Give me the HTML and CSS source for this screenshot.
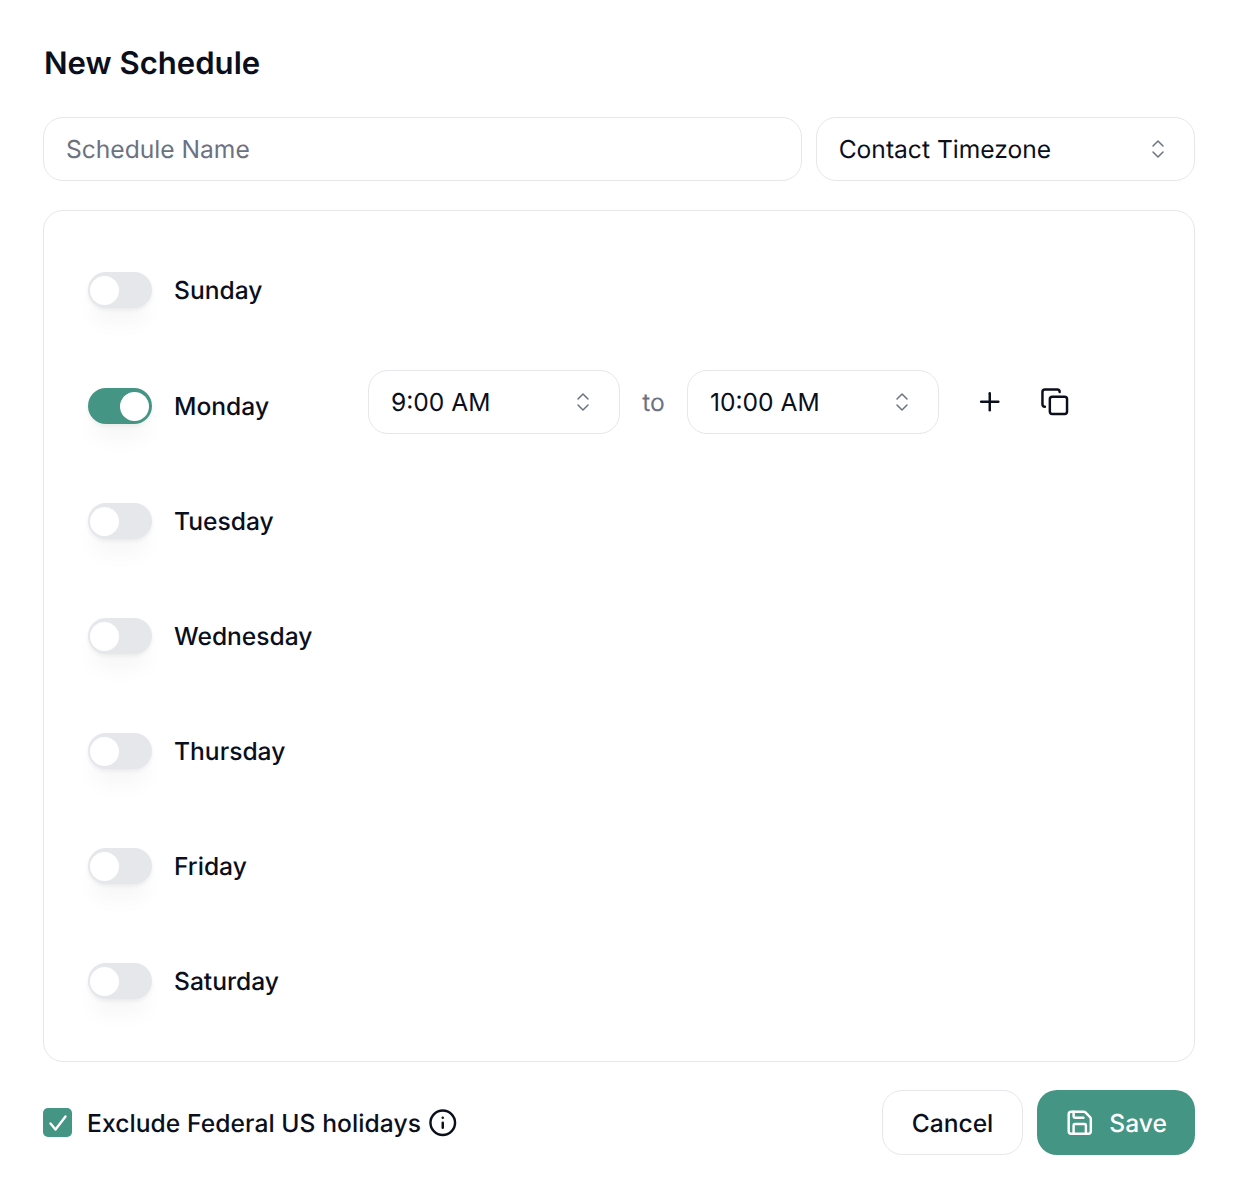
FILE: index.html
```html
<!DOCTYPE html>
<html lang="en">
<head>
<meta charset="utf-8">
<title>New Schedule</title>
<link rel="stylesheet" href="styles.css">
</head>
<body>
<main class="page">
  <h1 class="title">New Schedule</h1>
  <div class="top-fields">
    <input class="field name-input" type="text" placeholder="Schedule Name">
    <button class="field select" type="button"><span>Contact Timezone</span>
      <svg class="chev" viewBox="0 0 24 24"><path d="m7 15 5 5 5-5"/><path d="m7 9 5-5 5 5"/></svg>
    </button>
  </div>
  <section class="card">
    <div class="row">
      <div class="day"><span class="toggle"><span class="thumb"></span></span><span class="day-label">Sunday</span></div>
    </div>
    <div class="row row-monday">
      <div class="day"><span class="toggle on"><span class="thumb"></span></span><span class="day-label">Monday</span></div>
      <div class="slots">
        <button class="field select time" type="button"><span>9:00 AM</span>
          <svg class="chev" viewBox="0 0 24 24"><path d="m7 15 5 5 5-5"/><path d="m7 9 5-5 5 5"/></svg>
        </button>
        <span class="to">to</span>
        <button class="field select time" type="button"><span>10:00 AM</span>
          <svg class="chev" viewBox="0 0 24 24"><path d="m7 15 5 5 5-5"/><path d="m7 9 5-5 5 5"/></svg>
        </button>
        <div class="slot-actions">
          <svg class="icon" viewBox="0 0 24 24"><path d="M5 12h14"/><path d="M12 5v14"/></svg>
          <svg class="icon" viewBox="0 0 24 24"><rect x="8" y="8" width="14" height="14" rx="2" ry="2"/><path d="M4 16c-1.1 0-2-.9-2-2V4c0-1.1.9-2 2-2h10c1.1 0 2 .9 2 2"/></svg>
        </div>
      </div>
    </div>
    <div class="row">
      <div class="day"><span class="toggle"><span class="thumb"></span></span><span class="day-label">Tuesday</span></div>
    </div>
    <div class="row">
      <div class="day"><span class="toggle"><span class="thumb"></span></span><span class="day-label">Wednesday</span></div>
    </div>
    <div class="row">
      <div class="day"><span class="toggle"><span class="thumb"></span></span><span class="day-label">Thursday</span></div>
    </div>
    <div class="row">
      <div class="day"><span class="toggle"><span class="thumb"></span></span><span class="day-label">Friday</span></div>
    </div>
    <div class="row row-last">
      <div class="day"><span class="toggle"><span class="thumb"></span></span><span class="day-label">Saturday</span></div>
    </div>
  </section>
  <footer class="footer">
    <div class="holidays">
      <span class="checkbox"><svg viewBox="0 0 24 24"><path d="M4.5 12.5l5 6L19.5 5.5"/></svg></span>
      <span class="holidays-label">Exclude Federal US holidays</span>
      <svg class="icon info" viewBox="0 0 24 24"><circle cx="12" cy="12" r="10"/><path d="M12 16v-4"/><path d="M12 8h.01"/></svg>
    </div>
    <div class="actions">
      <button class="btn btn-cancel" type="button">Cancel</button>
      <button class="btn btn-save" type="button">
        <svg class="icon" viewBox="0 0 24 24"><path d="M15.2 3a2 2 0 0 1 1.4.6l3.8 3.8a2 2 0 0 1 .6 1.4V19a2 2 0 0 1-2 2H5a2 2 0 0 1-2-2V5a2 2 0 0 1 2-2z"/><path d="M17 21v-7a1 1 0 0 0-1-1H8a1 1 0 0 0-1 1v7"/><path d="M7 3v4a1 1 0 0 0 1 1h7"/></svg>
        <span>Save</span>
      </button>
    </div>
  </footer>
</main>
</body>
</html>
```
FILE: styles.css
```css
* { box-sizing: border-box; }
html, body { margin: 0; background: #fff; }
body {
  font-family: Inter, "Liberation Sans", sans-serif;
  color: #0b0f1c;
  font-size: 24.6px;
  text-rendering: geometricPrecision;
}
.page { padding: 43px 41px 41px 43px; }
.title {
  margin: 0 0 34px 1px;
  font-size: 31.1px;
  line-height: 40px;
  font-weight: 600;
}
.top-fields {
  display: grid;
  grid-template-columns: 2fr 1fr;
  gap: 14px;
  margin-bottom: 29px;
}
.field {
  height: 64px;
  width: 100%;
  border: 1px solid #e5e7eb;
  border-radius: 20px;
  background: #fff;
  padding: 0 22px;
  font: 400 24.6px Inter, "Liberation Sans", sans-serif;
  color: #0b0f1c;
  outline: none;
  text-rendering: geometricPrecision;
}
.name-input::placeholder { color: #6b7280; opacity: 1; }
.select {
  display: flex;
  align-items: center;
  justify-content: space-between;
  text-align: left;
  padding-right: 24px;
}
.chev {
  width: 24px;
  height: 24px;
  flex: none;
  fill: none;
  stroke: #6b7280;
  stroke-width: 1.5;
  stroke-linecap: round;
  stroke-linejoin: round;
}
.card {
  border: 1px solid #e5e7eb;
  border-radius: 20px;
  padding: 43px 44px 62px;
  margin-bottom: 28px;
}
.row { display: flex; align-items: flex-start; height: 115px; }
.row-monday { margin-top: 1px; }
.row-last { height: 54px; }
.day {
  display: flex;
  align-items: center;
  gap: 22px;
  width: 280px;
  padding-top: 18px;
  flex: none;
}
.day-label { font-weight: 500; line-height: 36px; }
.toggle {
  display: flex;
  align-items: center;
  justify-content: flex-start;
  width: 64px;
  height: 36px;
  padding: 0 3px 0 2px;
  border-radius: 18px;
  background: #e5e7eb;
  box-shadow: 0 2px 4px rgba(0, 0, 0, .06), 0 18px 22px -4px rgba(0, 0, 0, .04);
  flex: none;
}
.toggle.on { background: #449584; justify-content: flex-end; }
.thumb { width: 29px; height: 29px; border-radius: 50%; background: #fff; }
.slots { display: flex; align-items: center; }
.time { width: 252px; }
.to {
  width: 67px;
  text-align: center;
  color: #6b7280;
  font-weight: 400;
}
.slot-actions {
  display: flex;
  gap: 35.5px;
  margin-left: 35.75px;
}
.icon {
  width: 29.5px;
  height: 29.5px;
  flex: none;
  fill: none;
  stroke: currentColor;
  stroke-width: 2;
  stroke-linecap: round;
  stroke-linejoin: round;
}
.footer {
  display: flex;
  align-items: center;
  justify-content: space-between;
}
.holidays { display: flex; align-items: center; }
.checkbox {
  display: flex;
  align-items: center;
  justify-content: center;
  width: 29px;
  height: 29px;
  border-radius: 5px;
  background: #449584;
  margin-right: 15px;
}
.checkbox svg {
  width: 24px;
  height: 24px;
  flex: none;
  fill: none;
  stroke: #fff;
  stroke-width: 2.4;
  stroke-linecap: round;
  stroke-linejoin: round;
}
.holidays-label { font-weight: 500; letter-spacing: .07px; margin-right: 6.75px; }
.actions { display: flex; gap: 14px; }
.btn {
  display: flex;
  align-items: center;
  justify-content: center;
  height: 65px;
  border-radius: 20px;
  font: 500 24.6px Inter, "Liberation Sans", sans-serif;
  text-rendering: geometricPrecision;
}
.btn-cancel {
  width: 141px;
  background: #fff;
  border: 1px solid #e5e7eb;
  color: #0b0f1c;
}
.btn-save {
  width: 158px;
  gap: 14.75px;
  background: #449584;
  border: 0;
  color: #fff;
}
```
